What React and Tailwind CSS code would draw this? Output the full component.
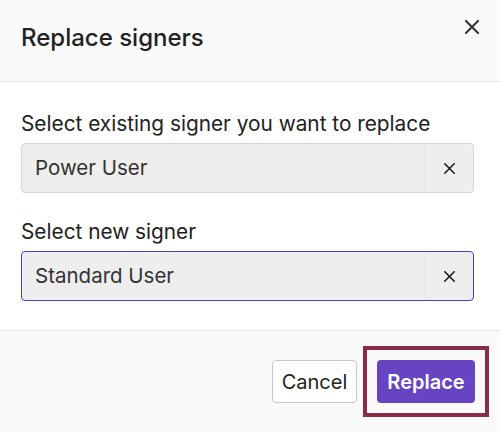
import React from "react";

function XIcon({ size = 14, stroke = 2 }) {
  return (
    <svg width={size} height={size} viewBox="0 0 14 14" fill="none">
      <path d="M1 1L13 13M13 1L1 13" stroke="currentColor" strokeWidth={stroke} strokeLinecap="square" />
    </svg>
  );
}

function SelectBox({ value, focused }) {
  return (
    <div
      className={
        "flex h-[50px] items-stretch rounded-[4px] border bg-[#eeeeee] " +
        (focused ? "border-[#4a3fc4]" : "border-[#d6d6d6]")
      }
    >
      <div className="flex flex-1 items-center pl-[13px] text-[20.5px] text-[#333333]">{value}</div>
      <div className="flex w-[48px] items-center justify-center border-l border-[#e4e4e4] text-[#111111]">
        <XIcon size={11} stroke={1.8} />
      </div>
    </div>
  );
}

export default function App() {
  return (
    <div
      className="flex h-[432px] w-[500px] flex-col bg-white text-[#222222]"
      style={{ fontFamily: "Inter, 'Noto Sans', sans-serif" }}
    >
      <div className="flex h-[82px] shrink-0 items-start justify-between border-b border-[#e3e3e3] bg-[#fafafa] pl-[21px] pr-[21px]">
        <h1 className="pt-[23px] text-[24px] font-medium leading-[30px] text-[#222222]">Replace signers</h1>
        <button className="mt-[20px] text-[#333333]">
          <XIcon size={14} stroke={2} />
        </button>
      </div>
      <div className="flex flex-1 flex-col pl-[21px] pr-[26px] pt-[29px]">
        <label className="text-[20.8px] leading-[26px] text-[#222222]">Select existing signer you want to replace</label>
        <div className="mt-[6px]">
          <SelectBox value="Power User" />
        </div>
        <label className="mt-[26px] text-[20.8px] leading-[26px] text-[#222222]">Select new signer</label>
        <div className="mt-[6px]">
          <SelectBox value="Standard User" focused />
        </div>
      </div>
      <div className="flex h-[102px] shrink-0 items-center justify-end border-t border-[#e3e3e3] bg-[#fafafa] pr-[11px]">
        <button className="h-[43px] w-[85px] rounded-[4px] border border-[#c8c8c8] bg-white text-[20px] text-[#222222]">
          Cancel
        </button>
        <div className="ml-[6px] flex h-[71px] w-[126px] items-center justify-center border-[4px] border-[#8a2b4c]">
          <button className="flex h-[43px] w-[98px] items-center justify-center rounded-[4px] bg-[#6644c2] text-[20px] font-semibold text-white">
            Replace
          </button>
        </div>
      </div>
    </div>
  );
}
